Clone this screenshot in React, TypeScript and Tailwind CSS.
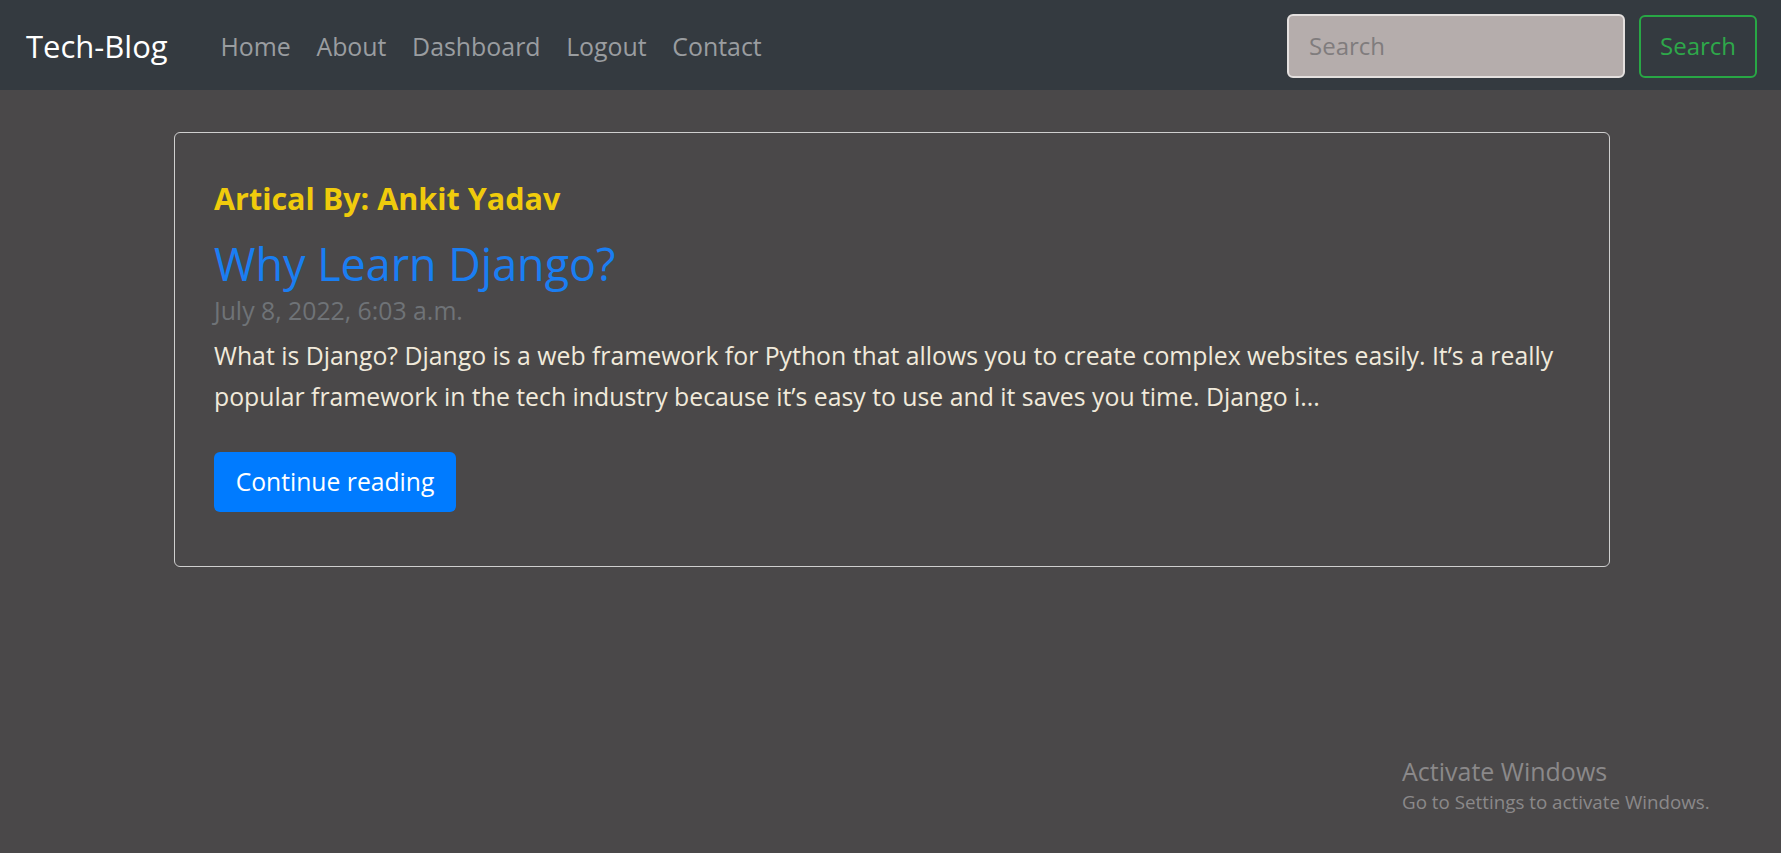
import React from "react";

export default function App() {
  const font = { fontFamily: '"Open Sans", "Noto Sans", sans-serif' };
  return (
    <div className="min-h-[853px] w-full bg-[#4a4849] relative" style={font}>
      <nav className="h-[90px] bg-[#343a40] flex items-center pl-[26px] pr-[24px] pt-[2px]">
        <span className="text-[31px] text-white leading-none">Tech-Blog</span>
        <ul className="flex items-center ml-[40px]">
          {["Home", "About", "Dashboard", "Logout", "Contact"].map((l) => (
            <li key={l} className="px-[12.8px] text-[24.9px] text-[#9a9da0] leading-none">
              {l}
            </li>
          ))}
        </ul>
        <div className="ml-auto flex items-center gap-[14px]">
          <div className="w-[338px] h-[64px] rounded-[6px] bg-[#b5adac] border-2 border-[#e4e0df] flex items-center pl-[20px] text-[24px] text-[#807c7d]">
            Search
          </div>
          <button className="w-[118px] h-[63px] rounded-[6px] border-2 border-[#28a745] text-[#2ea84a] text-[24px] flex items-center justify-center">
            Search
          </button>
        </div>
      </nav>

      <div className="w-[1436px] ml-[174px] mt-[42px] border border-[#cfcfcf] rounded-[6px] pl-[39px] pr-[38px] pt-[47px] pb-[54px]">
        <h4 className="text-[30.5px] leading-[36px] font-bold text-[#f0cb0c]">
          Artical By: Ankit Yadav
        </h4>
        <h2 className="mt-[20px] text-[44.9px] leading-[55px] font-medium text-[#1a7ef2]">Why Learn Django?</h2>
        <p className="text-[24.8px] leading-[38px] text-[#6f7377]">July 8, 2022, 6:03 a.m.</p>
        <p className="mt-[6px] text-[24.8px] leading-[41px] text-[#f1eadb] whitespace-nowrap">
          What is Django? Django is a web framework for Python that allows you to create complex websites easily. It’s a really
          <br />
          popular framework in the tech industry because it’s easy to use and it saves you time. Django i...
        </p>
        <button className="mt-[35px] h-[60px] w-[242px] rounded-[6px] bg-[#007bff] text-white text-[24.7px] flex items-center justify-center">
          Continue reading
        </button>
      </div>

      <div className="absolute left-[1402px] top-[756px] text-[#8b898a]">
        <div className="text-[25px] leading-[30px]">Activate Windows</div>
        <div className="text-[18.8px] leading-[32px]">Go to Settings to activate Windows.</div>
      </div>
    </div>
  );
}
